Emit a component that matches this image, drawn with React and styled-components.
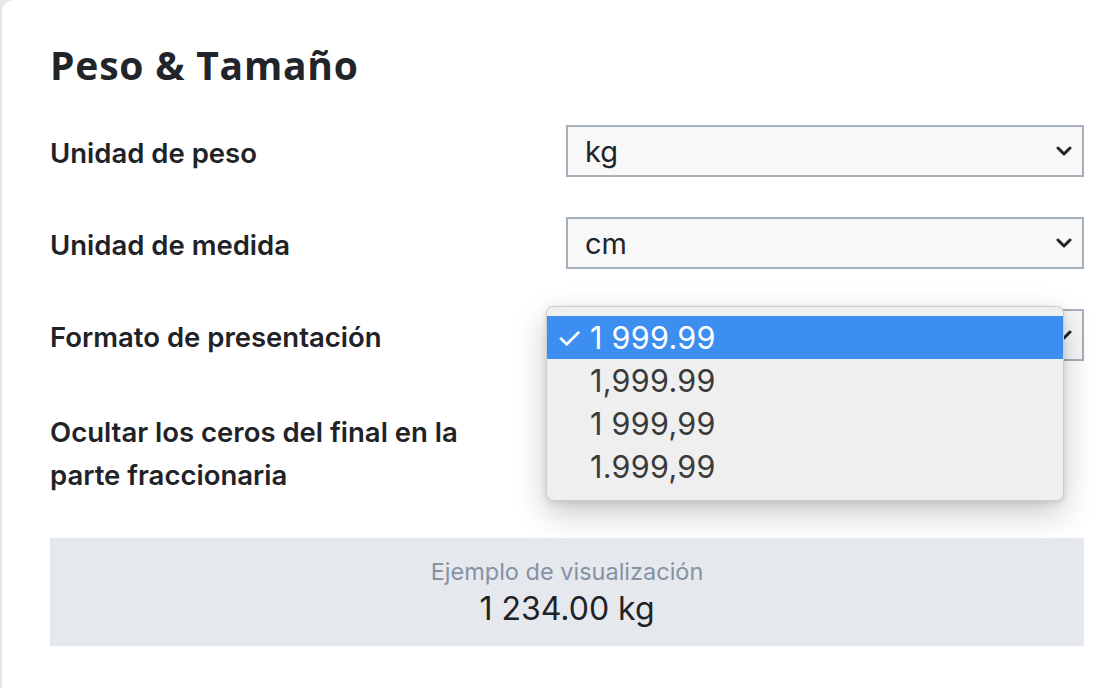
import React from 'react';
import styled, { createGlobalStyle } from 'styled-components';

const GlobalStyle = createGlobalStyle`
    html, body {
        margin: 0;
        padding: 0;
        background: #e3e7eb;
        overflow: hidden;
    }
`;

function Chevron() {
    return (
        <svg width="16" height="10" viewBox="0 0 16 10">
            <polyline points="2,2 8,8 14,2" fill="none" stroke="#1f2328" strokeWidth="3" strokeLinecap="round" strokeLinejoin="round" />
        </svg>
    )
}

function Select(props) {
    return (
        <SelectWrap>
            <SelectBox>
                <span>{props.value}</span>
                <Chevron />
            </SelectBox>
            {props.options && (
                <Popup>
                    {props.options.map((opt) => (
                        <PopupItem key={opt} $active={opt === props.value}>
                            <Check>{opt === props.value ? '✓' : ''}</Check>
                            {opt}
                        </PopupItem>
                    ))}
                </Popup>
            )}
        </SelectWrap>
    )
}

export default function App() {
    const formats = ['1 999.99', '1,999.99', '1 999,99', '1.999,99'];
    return (
        <>
            <GlobalStyle />
            <Card>
                <Title>Peso &amp; Tamaño</Title>
                <Form>
                    <Label>Unidad de peso</Label>
                    <Select value="kg" />
                    <Label>Unidad de medida</Label>
                    <Select value="cm" />
                    <Label>Formato de presentación</Label>
                    <Select value="1 999.99" options={formats} />
                    <Label $tall>Ocultar los ceros del final en la<br />parte fraccionaria</Label>
                    <div />
                </Form>
                <Preview>
                    <PreviewCaption>Ejemplo de visualización</PreviewCaption>
                    <PreviewValue>1 234.00 kg</PreviewValue>
                </Preview>
            </Card>
        </>
    )
}

const Card = styled.div`
    margin-left: 2px;
    min-height: 688px;
    box-sizing: border-box;
    background: #ffffff;
    border-top-left-radius: 12px;
    padding: 45px 12px 40px 48px;
    font-family: Inter, "Noto Sans", sans-serif;
    color: #1f2328;
`;

const Title = styled.h2`
    margin: 0 0 41px 0;
    font-family: "Open Sans", sans-serif;
    font-weight: 700;
    font-size: 39px;
    line-height: 39px;
    color: #212529;
    letter-spacing: 0.8px;
`;

const Form = styled.div`
    display: grid;
    grid-template-columns: 1fr 518px;
    row-gap: 40px;
    align-items: center;
`;

const Label = styled.div`
    font-size: 27.5px;
    font-weight: 600;
    line-height: 43px;
    padding-top: ${(p) => (p.$tall ? '0' : '5px')};
    margin-top: ${(p) => (p.$tall ? '10px' : '0')};
`;

const SelectWrap = styled.div`
    position: relative;
`;

const SelectBox = styled.div`
    height: 52px;
    box-sizing: border-box;
    border: 2px solid #a6b0ba;
    background: #f8f8f8;
    display: flex;
    align-items: center;
    justify-content: space-between;
    padding: 0 10px 0 17px;
    font-size: 29px;
    color: #1f2328;
`;

const Popup = styled.div`
    position: absolute;
    left: -20px;
    top: -3px;
    width: 518px;
    box-sizing: border-box;
    padding: 9px 0 12px;
    background: #efefef;
    border: 1px solid rgba(0, 0, 0, 0.14);
    border-radius: 7px;
    box-shadow: 0 12px 32px rgba(0, 0, 0, 0.22), 0 2px 6px rgba(0, 0, 0, 0.1);
    z-index: 2;
`;

const PopupItem = styled.div`
    height: 43px;
    display: flex;
    align-items: center;
    font-size: 30.5px;
    letter-spacing: 0.3px;
    color: ${(p) => (p.$active ? '#ffffff' : '#3a3a3a')};
    background: ${(p) => (p.$active ? '#3c8ff0' : 'transparent')};
`;

const Check = styled.span`
    width: 43px;
    padding-left: 9px;
    box-sizing: border-box;
    font-size: 30px;
`;

const Preview = styled.div`
    margin-top: 41px;
    height: 108px;
    background: #e5e8ec;
    display: flex;
    flex-direction: column;
    align-items: center;
    justify-content: center;
    gap: 3px;
`;

const PreviewCaption = styled.div`
    font-size: 23.5px;
    color: #8592a3;
`;

const PreviewValue = styled.div`
    font-size: 32px;
    color: #1f2328;
`;
